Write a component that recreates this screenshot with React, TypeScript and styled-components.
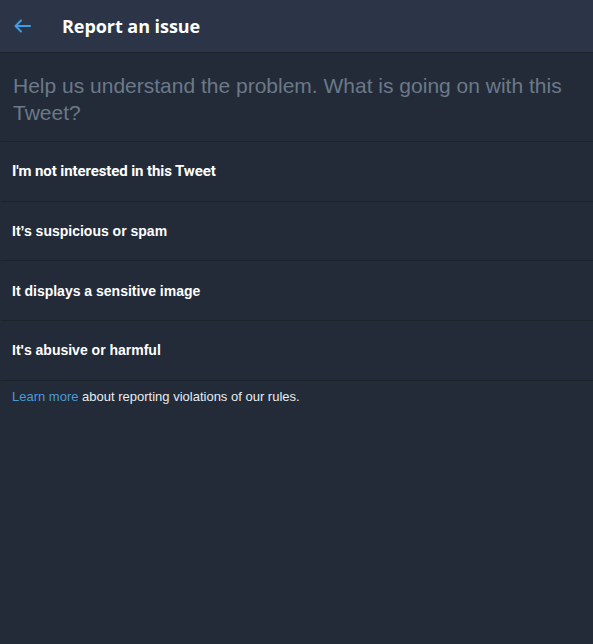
import React from "react";
import styled, { createGlobalStyle } from "styled-components";

const GlobalStyle = createGlobalStyle`
  html, body { margin: 0; padding: 0; background: #232b38; }
  body { font-family: "Liberation Sans", Arial, sans-serif; }
`;

const Page = styled.div`
  width: 593px;
  min-height: 644px;
  background: #232b38;
  display: flex;
  flex-direction: column;
`;

const Header = styled.header`
  height: 52px;
  background: #2b3547;
  border-bottom: 1px solid #1b222c;
  display: flex;
  align-items: center;
  padding-left: 13px;
  gap: 30px;
`;

const BackButton = styled.button`
  width: 19px;
  height: 20px;
  padding: 0;
  border: none;
  background: transparent;
  display: flex;
  align-items: center;
  justify-content: center;
  color: #3d9ee6;
  cursor: pointer;
`;

const Title = styled.h1`
  margin: 0;
  font-family: "Open Sans", "Noto Sans", sans-serif;
  font-weight: 700;
  font-size: 18px;
  color: #ffffff;
  letter-spacing: -0.05px;
`;

const Prompt = styled.p`
  margin: 0;
  padding: 19px 12px 15px;
  font-size: 21px;
  line-height: 27px;
  color: #6b7989;
  border-bottom: 1px solid #1c232d;
  margin-left: 1px;
`;

const Option = styled.button<{ $narrow?: boolean }>`
  box-sizing: border-box;
  height: 59.7px;
  display: flex;
  align-items: center;
  padding: 0 11px;
  margin-left: 1px;
  background: transparent;
  border: none;
  border-bottom: 1px solid #1c232d;
  text-align: left;
  font-family: ${(p) =>
    p.$narrow ? `Roboto, "Liberation Sans", sans-serif` : `"Liberation Sans", Arial, sans-serif`};
  font-weight: 700;
  font-size: ${(p) => (p.$narrow ? "15px" : "14px")};
  letter-spacing: ${(p) => (p.$narrow ? "-0.1px" : "0")};
  color: #ffffff;
  cursor: pointer;
`;

const Footer = styled.p`
  margin: 0;
  padding: 8px 12px;
  font-size: 13px;
  line-height: 16px;
  color: #e6ecf0;
`;

const Link = styled.a`
  color: #4b9ad8;
  text-decoration: none;
`;

const options = [
  { label: "I'm not interested in this Tweet", narrow: true },
  { label: "It’s suspicious or spam" },
  { label: "It displays a sensitive image" },
  { label: "It's abusive or harmful" },
];

export default function App() {
  return (
    <>
      <GlobalStyle />
      <Page>
        <Header>
          <BackButton aria-label="Back">
            <svg width="19" height="16" viewBox="0 0 19 16" fill="none">
              <path
                d="M17 8H2.5M8 2.5L2.5 8L8 13.5"
                stroke="currentColor"
                strokeWidth="2"
                strokeLinecap="round"
                strokeLinejoin="round"
              />
            </svg>
          </BackButton>
          <Title>Report an issue</Title>
        </Header>
        <Prompt>Help us understand the problem. What is going on with this Tweet?</Prompt>
        {options.map((o) => (
          <Option key={o.label} $narrow={o.narrow}>
            {o.label}
          </Option>
        ))}
        <Footer>
          <Link href="#">Learn more</Link> about reporting violations of our rules.
        </Footer>
      </Page>
    </>
  );
}
